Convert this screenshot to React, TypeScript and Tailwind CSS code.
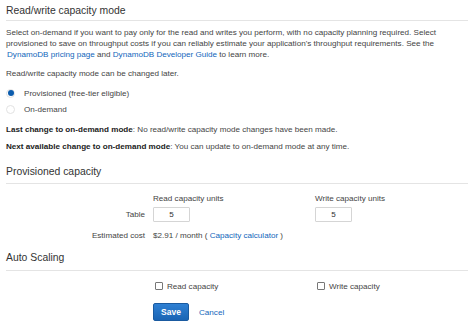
import React from "react"

function Heading({ children, className = "" }: { children: React.ReactNode; className?: string }) {
  return (
    <div className={`border-b border-[#e4e4e4] text-[10.4px] leading-[14px] text-[#333] ${className}`}>
      {children}
    </div>
  )
}

function Radio({ checked, label }: { checked?: boolean; label: string }) {
  return (
    <div className="flex h-[14px] items-center">
      <span className="flex h-[9px] w-[9px] items-center justify-center rounded-full border border-[#e2e2e2] bg-white">
        {checked && <span className="h-[6px] w-[6px] rounded-full bg-[#0b5cad]" />}
      </span>
      <span className="ml-[9px]">{label}</span>
    </div>
  )
}

function Checkbox({ label }: { label: string }) {
  return (
    <div className="flex h-[12px] items-center">
      <span className="ml-[2px] h-[8px] w-[8px] rounded-[1px] border border-[#777] bg-white" />
      <span className="ml-[4px]">{label}</span>
    </div>
  )
}

export default function App() {
  return (
    <div
      className="h-[327px] w-[474px] overflow-hidden bg-white px-[6px] text-[8.1px] leading-[11px] text-[#444]"
      style={{ fontFamily: '"Liberation Sans", Arial, sans-serif' }}
    >
      <Heading className="pt-[4px] pb-[2px]">Read/write capacity mode</Heading>

      <p className="mt-[6px] whitespace-nowrap">
        Select on-demand if you want to pay only for the read and writes you perform, with no capacity planning required. Select
        <br />
        provisioned to save on throughput costs if you can reliably estimate your application's throughput requirements. See the
        <br />
        <a className="ml-[1px] text-[#1166bb]">DynamoDB pricing page</a> and{" "}
        <a className="text-[#1166bb]">DynamoDB Developer Guide</a> to learn more.
      </p>

      <p className="mt-[8px]">Read/write capacity mode can be changed later.</p>

      <div className="mt-[7px]">
        <Radio checked label="Provisioned (free-tier eligible)" />
      </div>
      <div className="mt-[2px]">
        <Radio label="On-demand" />
      </div>

      <p className="mt-[8px]">
        <span className="font-bold text-[#222]">Last change to on-demand mode</span>: No read/write capacity mode changes have been made.
      </p>
      <p className="mt-[6px]">
        <span className="font-bold text-[#222]">Next available change to on-demand mode</span>: You can update to on-demand mode at any time.
      </p>

      <Heading className="mt-[13px] pb-[4px]">Provisioned capacity</Heading>

      <div className="grid grid-cols-[139px_154px_1fr] gap-x-[8px]">
        <div />
        <div className="mt-[9px]">Read capacity units</div>
        <div className="mt-[9px]">Write capacity units</div>

        <div className="mt-[3px] flex h-[15px] items-center justify-end">Table</div>
        <div className="mt-[3px]">
          <div className="flex h-[15px] w-[37px] items-center justify-center rounded-[1px] border border-[#d5d5d5] text-[#333]">5</div>
        </div>
        <div className="mt-[3px]">
          <div className="flex h-[15px] w-[37px] items-center justify-center rounded-[1px] border border-[#d5d5d5] text-[#333]">5</div>
        </div>

        <div className="mt-[8px] text-right">Estimated cost</div>
        <div className="col-span-2 mt-[8px] whitespace-nowrap">
          $2.91 / month ( <a className="text-[#1166bb]">Capacity calculator</a> )
        </div>
      </div>

      <Heading className="mt-[10px] pb-[5px]">Auto Scaling</Heading>

      <div className="grid grid-cols-[139px_154px_1fr] gap-x-[8px]">
        <div />
        <div className="mt-[9px]">
          <Checkbox label="Read capacity" />
        </div>
        <div className="mt-[9px]">
          <Checkbox label="Write capacity" />
        </div>

        <div />
        <div className="col-span-2 mt-[11px] flex items-center">
          <button className="h-[18px] w-[36px] rounded-[2px] border border-[#1a5aa0] bg-gradient-to-b from-[#2f80d3] to-[#1a64b4] text-[8.5px] font-bold text-white">
            Save
          </button>
          <a className="ml-[10px] text-[#1166bb]">Cancel</a>
        </div>
      </div>
    </div>
  )
}
